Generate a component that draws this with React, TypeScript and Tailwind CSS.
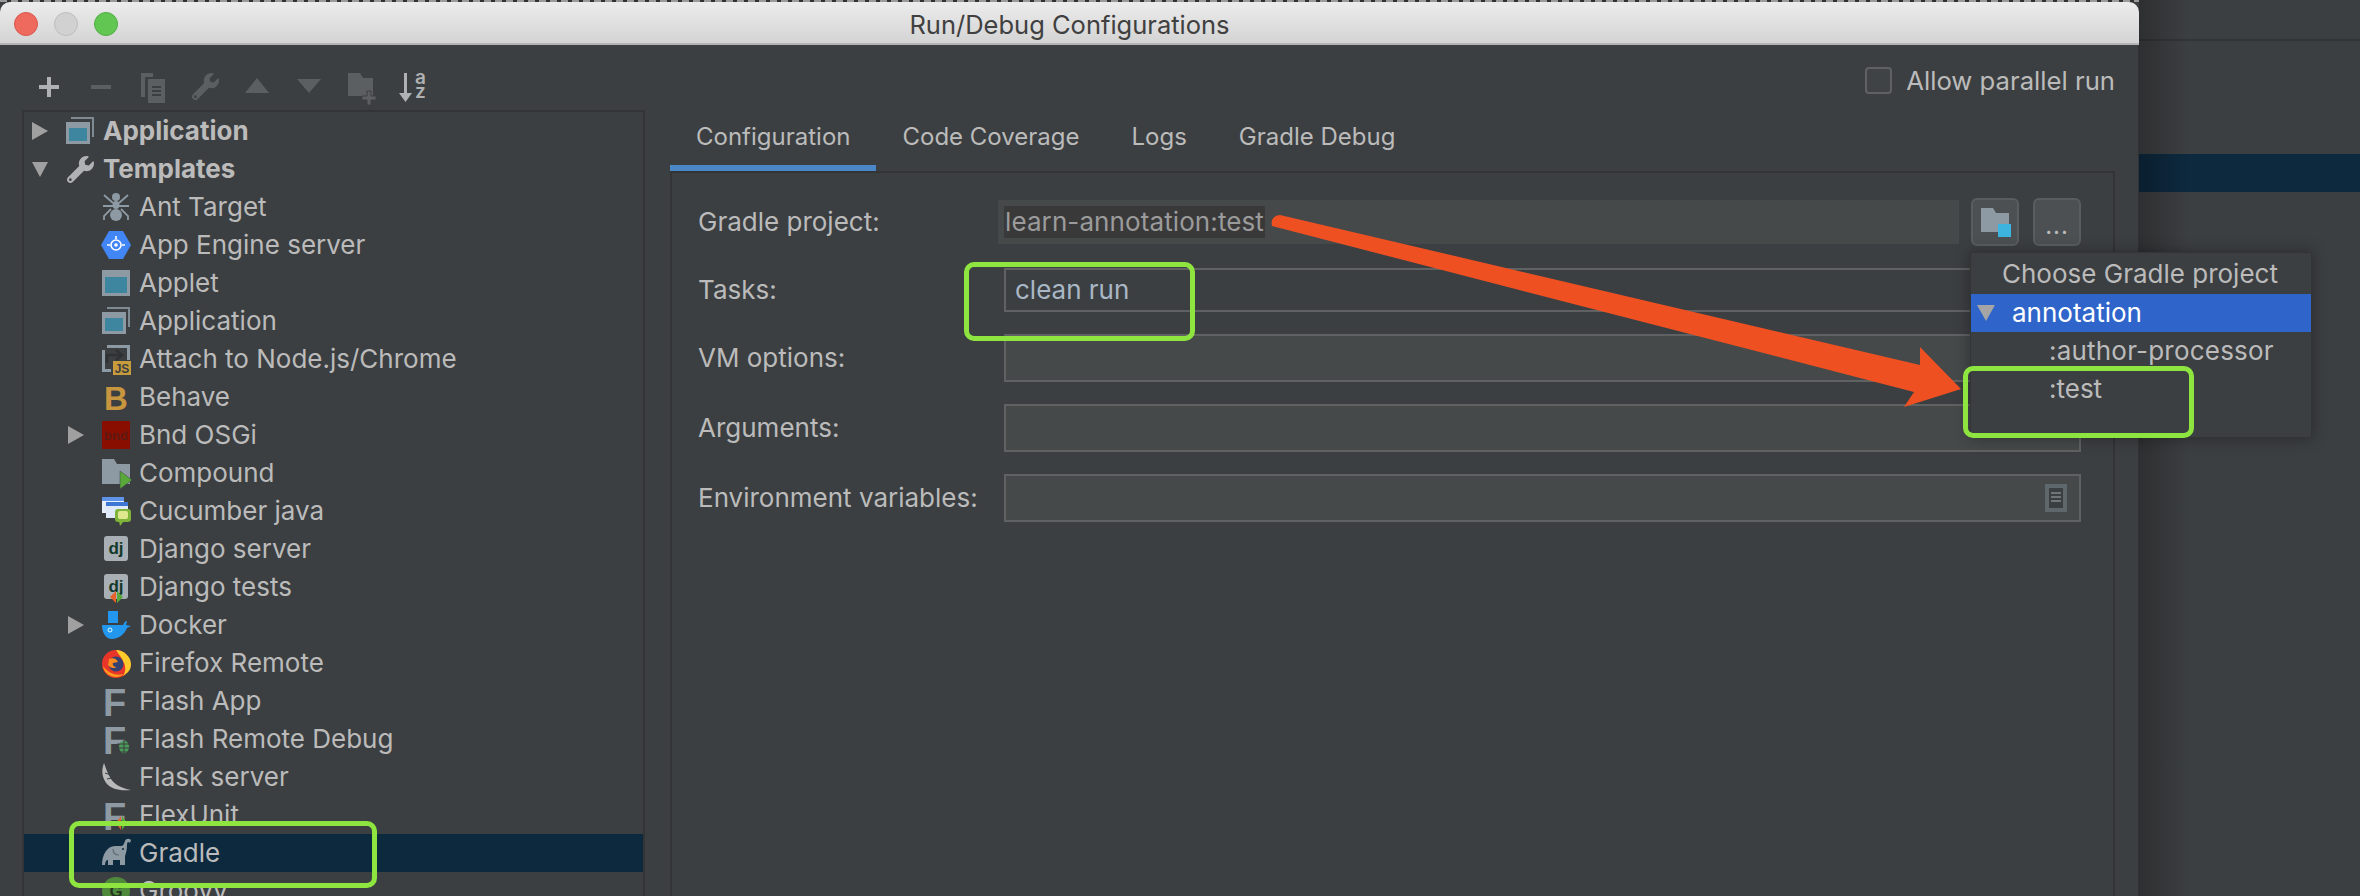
import { ReactNode } from 'react';
import { FaWrench } from 'react-icons/fa';

const SANS = 'font-["Inter",sans-serif]';

const Caret = ({ open }: { open?: boolean }) => (
  <svg width="16" height="20" viewBox="0 0 16 20" className="shrink-0">
    {open ? <path d="M0 3h16L8 18z" fill="#a0a0a0" /> : <path d="M0 1l16 9L0 19z" fill="#a0a0a0" />}
  </svg>
);

const Frame = ({ children }: { children: ReactNode }) => (
  <svg width="30" height="30" viewBox="0 0 30 30" className="shrink-0 overflow-visible">
    {children}
  </svg>
);

const AppletIcon = () => (
  <Frame>
    <rect x="1" y="2" width="28" height="26" fill="#8d9aa3" />
    <rect x="4" y="9" width="22" height="16" fill="#3e869f" />
  </Frame>
);

const WindowIcon = () => (
  <Frame>
    <path d="M6 1h23v20h-2V3H6z" fill="#7f8b93" />
    <rect x="1" y="6" width="24" height="22" fill="#8d9aa3" />
    <rect x="4" y="12" width="18" height="13" fill="#3e869f" />
  </Frame>
);

const AntIcon = () => (
  <Frame>
    <g fill="#8d9aa3">
      <circle cx="15" cy="5" r="4" />
      <ellipse cx="15" cy="13" rx="3.5" ry="4" />
      <ellipse cx="15" cy="23" rx="6" ry="6" />
    </g>
    <g stroke="#8d9aa3" strokeWidth="1.8" fill="none">
      <path d="M3 3l9 8M27 3l-9 8M2 14h26M3 28v-4l7-7M27 28v-4l-7-7" />
    </g>
  </Frame>
);

const AppEngineIcon = () => (
  <Frame>
    <path d="M8 1h14l8 14-8 14H8L0 15z" fill="#4285f4" />
    <circle cx="15" cy="15" r="5" fill="none" stroke="#fff" strokeWidth="1.6" />
    <circle cx="15" cy="15" r="1.8" fill="#fff" />
    <path d="M15 6v3M6 15h3M21 15h3" stroke="#fff" strokeWidth="1.6" />
  </Frame>
);

const AttachIcon = () => (
  <Frame>
    <path d="M6 1h23v15h-3V4H6zM1 6h3v19h6v3H1z" fill="#8d9aa3" />
    <path d="M6 19v-8h14M15 6l6 5-6 5" stroke="#2f3132" strokeWidth="2.6" fill="none" />
    <rect x="12" y="17" width="18" height="14" fill="#c89b3c" />
    <text x="21" y="29" textAnchor="middle" fontSize="12" fontWeight="700" fill="#3c3f41" fontFamily="Liberation Sans">JS</text>
  </Frame>
);

const LetterB = () => (
  <Frame>
    <text x="3" y="28" fontSize="33" fontWeight="700" fill="#c8963e" fontFamily="Liberation Sans">B</text>
  </Frame>
);

const LetterF = ({ children }: { children?: ReactNode }) => (
  <Frame>
    <text x="2" y="30" fontSize="38" fontWeight="700" fill="#8d9aa3" fontFamily="Liberation Sans">F</text>
    {children}
  </Frame>
);

const BndIcon = () => (
  <Frame>
    <rect x="1" y="1" width="28" height="28" fill="#8a0e00" />
    <text x="15" y="20" textAnchor="middle" fontSize="13" fontWeight="700" fill="#5c1a12" fontFamily="Liberation Sans">bnd</text>
  </Frame>
);

const CompoundIcon = () => (
  <Frame>
    <path d="M1 1h12l3 5h13v20H1z" fill="#8d9aa3" />
    <path d="M19 13l12 9-12 9z" fill="#59a83a" stroke="#3c3f41" strokeWidth="0.5" />
  </Frame>
);

const CucumberIcon = () => (
  <Frame>
    <rect x="1" y="1" width="22" height="16" fill="#e7eefb" />
    <rect x="1" y="1" width="22" height="4" fill="#5d93e8" />
    <rect x="5" y="6" width="22" height="16" fill="#dfe9f9" />
    <rect x="5" y="6" width="22" height="4" fill="#3e76d6" />
    <rect x="14" y="13" width="16" height="13" rx="3" fill="#7fb43a" />
    <rect x="17" y="15" width="10" height="8" rx="2" fill="#dfe88f" />
    <path d="M18 25h5l-4 5z" fill="#7fb43a" />
  </Frame>
);

const DjIcon = ({ tests }: { tests?: boolean }) => (
  <Frame>
    <rect x="3" y="2" width="24" height="25" rx="3" fill="#a8b0b5" />
    <text x="15" y="20" textAnchor="middle" fontSize="17" fontWeight="700" fill="#12392a" fontFamily="Liberation Sans">dj</text>
    {tests && <path d="M15 19l-6 6 6 6z" fill="#e8622a" />}
    {tests && <path d="M16 19l6 6-6 6z" fill="#59a83a" />}
  </Frame>
);

const DockerIcon = () => (
  <Frame>
    <rect x="7" y="1" width="10" height="12" fill="#2396ed" />
    <path d="M1 15h21c1-2 2-4 4-4l-1 4 5 1-4 2c-3 7-9 11-15 11-6 0-10-6-10-14z" fill="#2396ed" />
    <circle cx="9" cy="20" r="2" fill="none" stroke="#dff" strokeWidth="1" />
  </Frame>
);

const FirefoxIcon = () => (
  <Frame>
    <circle cx="15" cy="16" r="14" fill="#e8352a" />
    <path d="M15 2c8 0 15 7 15 14s-4 9-8 12c3-5 3-10 0-15-1-3-4-6-7-11z" fill="#ffcb2b" />
    <path d="M2 18c1 7 7 11 13 11 3 0 6-1 8-3-7 2-15 0-21-8z" fill="#ff9a1e" />
    <circle cx="15" cy="16" r="7.5" fill="#35416e" />
    <path d="M8 11c4-2 8 0 9 3l-5 1c-1 2 1 4 4 4-3 2-7 1-9-2z" fill="#ff8a1e" />
  </Frame>
);

const FlaskIcon = () => (
  <Frame>
    <path d="M3 1c-3 8-2 15 3 21 5 5 12 7 24 6-10-2-17-6-20-11C7 12 5 7 3 1z" fill="#b9b9b9" />
    <path d="M5 6l5 3M4 11l6 2M6 17l5-1" stroke="#3c3f41" strokeWidth="1" />
  </Frame>
);

const GradleIcon = () => (
  <Frame>
    <path
      d="M1 27C1 17 6 8 14 8h6c2 0 3-2 4-5 1-2.500 4-3 6-1l-1 3c-2-2-3-.5-3 2 0 5-1 8-2 11v9h-5v-5h-7v5H7v-5c-2 0-3 2-3 5z"
      fill="#8d9aa3"
    />
    <path d="M12 11c0 4 2 6 6 6" stroke="#5f6c74" strokeWidth="1.2" fill="none" />
    <circle cx="22" cy="11" r="1" fill="#0d293e" />
  </Frame>
);

const GroovyIcon = () => (
  <Frame>
    <circle cx="15" cy="15" r="14" fill="#4f8a3c" />
    <text x="15" y="21" textAnchor="middle" fontSize="17" fontWeight="700" fill="#26391f" fontFamily="Liberation Sans">G</text>
  </Frame>
);

type TreeItem = { label: string; icon: ReactNode; depth?: number; bold?: boolean; caret?: 'open' | 'closed'; selected?: boolean };

const treeItems: TreeItem[] = [
  { label: 'Application', icon: <WindowIcon />, bold: true, caret: 'closed' },
  { label: 'Templates', icon: <FaWrench size={27} color="#afb1b3" className="shrink-0" />, bold: true, caret: 'open' },
  { label: 'Ant Target', icon: <AntIcon />, depth: 1 },
  { label: 'App Engine server', icon: <AppEngineIcon />, depth: 1 },
  { label: 'Applet', icon: <AppletIcon />, depth: 1 },
  { label: 'Application', icon: <WindowIcon />, depth: 1 },
  { label: 'Attach to Node.js/Chrome', icon: <AttachIcon />, depth: 1 },
  { label: 'Behave', icon: <LetterB />, depth: 1 },
  { label: 'Bnd OSGi', icon: <BndIcon />, depth: 1, caret: 'closed' },
  { label: 'Compound', icon: <CompoundIcon />, depth: 1 },
  { label: 'Cucumber java', icon: <CucumberIcon />, depth: 1 },
  { label: 'Django server', icon: <DjIcon />, depth: 1 },
  { label: 'Django tests', icon: <DjIcon tests />, depth: 1 },
  { label: 'Docker', icon: <DockerIcon />, depth: 1, caret: 'closed' },
  { label: 'Firefox Remote', icon: <FirefoxIcon />, depth: 1 },
  { label: 'Flash App', icon: <LetterF />, depth: 1 },
  {
    label: 'Flash Remote Debug',
    icon: (
      <LetterF>
        <ellipse cx="23" cy="23" rx="5" ry="6.500" fill="#4a9c5a" />
        <path d="M16 20h14M16 24h14M16 28h14M23 16v14" stroke="#3c3f41" strokeWidth="1" />
      </LetterF>
    ),
    depth: 1,
  },
  { label: 'Flask server', icon: <FlaskIcon />, depth: 1 },
  {
    label: 'FlexUnit',
    icon: (
      <LetterF>
        <path d="M20 16l-5 7 5 7z" fill="#e8622a" />
        <path d="M21 16l5 7-5 7z" fill="#59a83a" />
      </LetterF>
    ),
    depth: 1,
  },
  { label: 'Gradle', icon: <GradleIcon />, depth: 1, selected: true },
  { label: 'Groovy', icon: <GroovyIcon />, depth: 1 },
];

const TreeRow = ({ item }: { item: TreeItem }) => (
  <div className={`flex items-center h-[38px] shrink-0 ${item.depth ? 'pl-[44px]' : 'pl-[8px]'} ${item.selected ? 'bg-[#0d293e]' : ''}`}>
    <div className="w-[16px] shrink-0">{item.caret && <Caret open={item.caret === 'open'} />}</div>
    <div className="w-[30px] ml-[17px] flex justify-center shrink-0">{item.icon}</div>
    <span className={`ml-[8px] text-[26px] leading-none text-[#bbbbbb] ${item.bold ? 'font-bold' : ''}`}>{item.label}</span>
  </div>
);

const Toolbar = () => (
  <div className="h-[65px] flex items-center pl-[9px] pt-[18px] gap-[16px]">
    <svg width="36" height="36" viewBox="0 0 36 36"><path d="M16 8h4v8h8v4h-8v8h-4v-8H8v-4h8z" fill="#afb1b3" /></svg>
    <svg width="36" height="36" viewBox="0 0 36 36"><rect x="8" y="16" width="20" height="4" fill="#5c5f61" /></svg>
    <svg width="36" height="36" viewBox="0 0 36 36">
      <path d="M6 4h12v4H10v20H6z" fill="#5c5f61" />
      <path d="M13 10h17v24H13z" fill="#5c5f61" />
      <path d="M17 18h9M17 22h9M17 26h9" stroke="#3c3f41" strokeWidth="2" />
    </svg>
    <div className="w-[36px] h-[36px] flex items-center justify-center"><FaWrench size={27} color="#5c5f61" /></div>
    <svg width="36" height="36" viewBox="0 0 36 36"><path d="M18 9l12 15H6z" fill="#5c5f61" /></svg>
    <svg width="36" height="36" viewBox="0 0 36 36"><path d="M6 10h24L18 24z" fill="#5c5f61" /></svg>
    <svg width="36" height="36" viewBox="0 0 36 36">
      <path d="M5 4h12l3 5h10v18H5z" fill="#5c5f61" />
      <path d="M24 22h4v5h5v4h-5v5h-4v-5h-5v-4h5z" fill="#5c5f61" stroke="#3c3f41" strokeWidth="1" />
    </svg>
    <div className="relative w-[36px] h-[36px]">
      <svg width="36" height="36" viewBox="0 0 36 36">
        <path d="M9 4h3v20h5l-6.500 9L4 24h5z" fill="#afb1b3" />
      </svg>
      <span className="absolute left-[20px] top-[2px] text-[19px] font-semibold leading-[14px] text-[#afb1b3]">a</span>
      <span className="absolute left-[20px] top-[16px] text-[19px] font-semibold leading-[14px] text-[#afb1b3]">z</span>
    </div>
  </div>
);

const Field = ({ value, light = true, children }: { value?: string; light?: boolean; children?: ReactNode }) => (
  <div className={`flex-1 border-2 border-[#5f6162] flex items-center pl-[9px] pr-[12px] ${light ? 'bg-[#45494a] h-[48px]' : 'bg-[#3c3f41] h-[44px]'}`}>
    <span className="flex-1 text-[26px] leading-none text-[#a9b7c6]">{value}</span>
    {children}
  </div>
);

const FormRow = ({ label, className, children }: { label: string; className?: string; children: ReactNode }) => (
  <div className={`flex items-center h-[48px] pr-[32px] ${className ?? ''}`}>
    <span className="w-[306px] shrink-0 text-[26px] leading-none text-[#bbbbbb]">{label}</span>
    {children}
  </div>
);

const IconButton = ({ children }: { children: ReactNode }) => (
  <div className="w-[48px] h-[48px] rounded-[6px] border-2 border-[#5a5d5f] bg-[#4c5052] flex items-center justify-center shrink-0">{children}</div>
);

const tabs = ['Configuration', 'Code Coverage', 'Logs', 'Gradle Debug'];

const ConfigPanel = () => (
  <div className="flex-1 flex flex-col border-2 border-b-0 border-[#323436] pl-[26px]">
    <FormRow label="Gradle project:" className="mt-[25px] pr-[31px]">
      <div className="flex-1 -ml-[6px] h-[44px] bg-[#45494a] flex items-center pl-[6px]">
        <span className="bg-[#39393a] h-[32px] flex items-center text-[26px] leading-none text-[#9b9b9b] pl-[1px] pr-[1px] tracking-[0.1px]">learn-annotation:test</span>
      </div>
      <div className="ml-[12px] flex gap-[14px]">
        <IconButton>
          <svg width="36" height="36" viewBox="0 0 36 36">
            <path d="M4 4h12l3 5h13v19H4z" fill="#8d9aa3" />
            <rect x="21" y="20" width="13" height="13" fill="#3db3e0" />
          </svg>
        </IconButton>
        <IconButton>
          <span className="text-[24px] leading-none text-[#bbbbbb] tracking-[1px] mt-[8px]">...</span>
        </IconButton>
      </div>
    </FormRow>
    <FormRow label="Tasks:" className="mt-[20px]">
      <Field value="clean run" light={false} />
    </FormRow>
    <FormRow label="VM options:" className="mt-[20px]">
      <Field />
    </FormRow>
    <FormRow label="Arguments:" className="mt-[22px]">
      <Field />
    </FormRow>
    <FormRow label="Environment variables:" className="mt-[22px]">
      <Field>
        <svg width="22" height="28" viewBox="0 0 22 28" className="shrink-0">
          <rect x="0" y="0" width="22" height="28" fill="#5d676c" />
          <rect x="4" y="4" width="14" height="20" fill="#3c3f41" />
          <path d="M6 9h10M6 13h10M6 17h10" stroke="#6f7678" strokeWidth="2" />
        </svg>
      </Field>
    </FormRow>
  </div>
);

const ProjectPopup = () => (
  <div className="absolute left-[1970px] top-[252px] w-[342px] h-[186px] bg-[#3c3f41] border border-[#323436] shadow-[0_0_14px_rgba(0,0,0,0.35)] flex flex-col">
    <div className="h-[41px] flex items-center pl-[31px] text-[26px] leading-none text-[#bbbbbb]">Choose Gradle project</div>
    <div className="h-[38px] flex items-center bg-[#2f65ca] pl-[6px]">
      <svg width="18" height="16" viewBox="0 0 18 16"><path d="M0 0h18L9 16z" fill="#a5a5a5" /></svg>
      <span className="ml-[17px] text-[26px] leading-none text-white">annotation</span>
    </div>
    <div className="h-[38px] flex items-center pl-[78px] text-[26px] leading-none text-[#bbbbbb] tracking-[0.2px]">:author-processor</div>
    <div className="h-[38px] flex items-center pl-[78px] text-[26px] leading-none text-[#bbbbbb]">:test</div>
  </div>
);

const Callout = ({ className }: { className: string }) => (
  <div className={`absolute border-[5px] border-[#8ee53f] rounded-[10px] ${className}`} />
);

const App = () => (
  <div className={`relative w-[2360px] h-[896px] overflow-hidden flex bg-[#3c3f41] ${SANS}`}>
    <div className="w-[2139px] shrink-0 h-full flex flex-col">
      <div className="h-[2px] shrink-0 bg-[repeating-linear-gradient(90deg,#9a9a9a_0,#9a9a9a_7px,#2f3132_7px,#2f3132_11px)]" />
      <div className="h-[43px] shrink-0 rounded-t-[10px] bg-gradient-to-b from-[#ececec] to-[#d4d4d4] border-b-2 border-[#b4b4b4] relative flex items-center justify-center">
        <div className="absolute left-[14px] top-[10px] flex gap-[16px]">
          <div className="w-[24px] h-[24px] rounded-full bg-[#ee6a5f] border border-[#d9574d]" />
          <div className="w-[24px] h-[24px] rounded-full bg-[#d1d1d1] border border-[#bdbdbd]" />
          <div className="w-[24px] h-[24px] rounded-full bg-[#62c653] border border-[#52ad45]" />
        </div>
        <span className="text-[25.5px] leading-none text-[#404040] mt-[4px]">Run/Debug Configurations</span>
      </div>
      <div className="flex-1 flex bg-[#3c3f41] min-h-0 border-r border-[#303233]">
        <div className="w-[645px] shrink-0 pl-[22px] flex flex-col min-h-0">
          <Toolbar />
          <div className="flex-1 min-h-0 overflow-hidden border-2 border-b-0 border-[#323436] flex flex-col">
            {treeItems.map((item, i) => <TreeRow key={i} item={item} />)}
          </div>
        </div>
        <div className="w-[1470px] shrink-0 pl-[25px] flex flex-col min-h-0">
          <div className="mt-[22px] h-[27px] flex items-center justify-end">
            <div className="w-[27px] h-[27px] rounded-[4px] border-2 border-[#5f6162] bg-[#3f4345]" />
            <span className="ml-[14px] text-[25.7px] leading-none text-[#bbbbbb]">Allow parallel run</span>
          </div>
          <div className="mt-[29px] h-[48px] flex">
            {tabs.map((t, i) => (
              <div key={t} className={`h-[48px] px-[26px] flex items-center text-[24px] leading-none text-[#bbbbbb] pb-[14px] border-b-[6px] ${i === 0 ? 'border-[#4a88c7]' : 'border-transparent'}`}>{t}</div>
            ))}
          </div>
          <ConfigPanel />
        </div>
      </div>
    </div>

    <div className="flex-1 flex flex-col relative">
      <div className="h-[41px] border-b-2 border-[#323436] bg-[#3c3f41]" />
      <div className="mt-[113px] h-[38px] bg-[#0d293e]" />
      <div className="absolute inset-y-0 left-0 w-[50px] bg-gradient-to-r from-black/25 to-transparent" />
    </div>

    <ProjectPopup />

    <svg className="absolute left-0 top-0 pointer-events-none" width="2360" height="896" viewBox="0 0 2360 896">
      <path d="M1280 215L1920 365L1920 347L1961 389L1904 407L1914 392L1272 226Q1270 216 1280 215Z" fill="#ee5022" />
    </svg>
    <Callout className="left-[69px] top-[821px] w-[308px] h-[67px]" />
    <Callout className="left-[964px] top-[262px] w-[231px] h-[79px]" />
    <Callout className="left-[1963px] top-[366px] w-[231px] h-[72px]" />
  </div>
);

export default App;
